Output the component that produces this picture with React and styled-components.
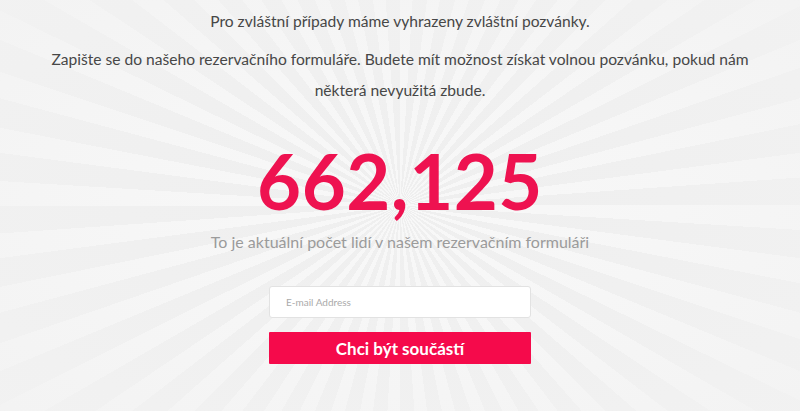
import React from 'react';
import styled, { createGlobalStyle } from 'styled-components';

const GlobalStyle = createGlobalStyle`
    html, body {
        margin: 0;
        padding: 0;
    }
    body {
        font-family: Lato, "Open Sans", "Liberation Sans", sans-serif;
        background: #f2f2f2;
    }
`

const Page = styled.div`
    position: relative;
    height: 411px;
    overflow: hidden;
    display: flex;
    flex-direction: column;
    align-items: center;
    padding-top: 6px;
    box-sizing: border-box;
    background:
        radial-gradient(ellipse at 50% 50%, rgba(242,242,242,0) 0%, rgba(242,242,242,0.3) 45%, rgba(242,242,242,0.85) 100%),
        repeating-conic-gradient(from 0deg at 50% 50%, #f8f8f8 0deg 3.5deg, #efefef 3.5deg 7.5deg);
`

const Intro = styled.p`
    margin: 0 0 7px;
    max-width: 720px;
    font-size: 15.6px;
    line-height: 31px;
    color: #474747;
    text-align: center;
`

const Counter = styled.h1`
    margin: 30px 0 0;
    font-size: 76px;
    line-height: 76px;
    font-weight: 700;
    color: #ee1250;
    letter-spacing: 0.5px;
`

const Caption = styled.p`
    margin: 11px 0 0;
    font-size: 16px;
    line-height: 24px;
    color: #9b9b9b;
`

const Form = styled.form`
    display: flex;
    flex-direction: column;
    gap: 14px;
    width: 262px;
    margin-top: 32px;
`

const EmailInput = styled.input`
    height: 32px;
    box-sizing: border-box;
    border: 1px solid #e2e2e2;
    border-radius: 3px;
    background: #fff;
    padding: 0 16px;
    font-family: inherit;
    font-size: 10px;
    color: #333;
    outline: none;
    &::placeholder {
        color: #aaaaaa;
    }
`

const SubmitButton = styled.button`
    height: 32px;
    border: none;
    border-radius: 1px;
    background: #f50a4b;
    color: #fff;
    font-family: inherit;
    font-size: 17px;
    font-weight: 700;
    cursor: pointer;
`

const App = () => (
    <Page>
        <GlobalStyle />
        <Intro>Pro zvláštní případy máme vyhrazeny zvláštní pozvánky.</Intro>
        <Intro>
            Zapište se do našeho rezervačního formuláře. Budete mít možnost získat volnou pozvánku, pokud nám některá nevyužitá zbude.
        </Intro>
        <Counter>662,125</Counter>
        <Caption>To je aktuální počet lidí v našem rezervačním formuláři</Caption>
        <Form onSubmit={(e) => e.preventDefault()}>
            <EmailInput type="email" placeholder="E-mail Address" />
            <SubmitButton type="submit">Chci být součástí</SubmitButton>
        </Form>
    </Page>
)

export default App;
